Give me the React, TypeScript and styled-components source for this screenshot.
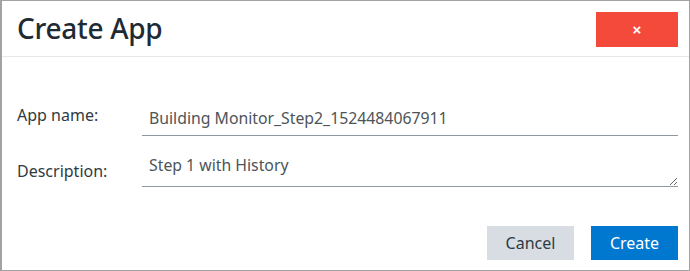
import React from 'react';
import styled, { createGlobalStyle } from 'styled-components';

const GlobalStyle = createGlobalStyle`
  body {
    margin: 0;
    background: #ffffff;
    font-family: 'Noto Sans', 'Liberation Sans', sans-serif;
  }
`;

const Dialog = styled.div`
  box-sizing: border-box;
  width: 690px;
  height: 271px;
  border: 1px solid #a2a2a2;
  border-left-width: 2px;
  background: #ffffff;
  display: flex;
  flex-direction: column;
`;

const Header = styled.div`
  box-sizing: border-box;
  height: 56px;
  padding: 0 11px 0 15px;
  display: flex;
  align-items: center;
  justify-content: space-between;
  border-bottom: 1px solid #e6e8e9;
`;

const Title = styled.h1`
  margin: 0;
  font-size: 28px;
  font-weight: 500;
  color: #1f2b34;
  letter-spacing: -0.3px;
  line-height: 1;
  margin-top: -2px;
`;

const CloseButton = styled.button`
  width: 82px;
  height: 35px;
  margin-top: 2px;
  border: none;
  background: #f44a3b;
  color: #ffffff;
  font-size: 15px;
  font-weight: 700;
  display: flex;
  align-items: center;
  justify-content: center;
  padding: 0;
  cursor: pointer;
`;

const Form = styled.div`
  padding: 43px 11px 0 15px;
  display: grid;
  grid-template-columns: 125px 1fr;
  row-gap: 15px;
  align-items: center;
`;

const Label = styled.label<{ $offset?: number }>`
  font-size: 16px;
  color: #2f3a42;
  position: relative;
  top: ${(p) => p.$offset ?? 0}px;
`;

const TextInput = styled.input`
  box-sizing: border-box;
  width: 100%;
  height: 36px;
  border: none;
  border-bottom: 1px solid #8d9aa3;
  padding: 0 7px;
  font-family: inherit;
  font-size: 15.8px;
  color: #4d5459;
  outline: none;
  background: transparent;
`;

const TextArea = styled.textarea`
  box-sizing: border-box;
  width: 100%;
  height: 36px;
  border: none;
  border-bottom: 1px solid #8d9aa3;
  padding: 3px 7px 0;
  font-family: inherit;
  font-size: 15.8px;
  line-height: 22px;
  color: #4d5459;
  outline: none;
  resize: vertical;
  background: transparent;
  display: block;
`;

const Footer = styled.div`
  margin-top: auto;
  padding: 0 11px 10px 0;
  display: flex;
  justify-content: flex-end;
  gap: 17px;
`;

const ActionButton = styled.button<{ $primary?: boolean }>`
  width: 87px;
  height: 34px;
  border: none;
  padding: 0;
  font-family: inherit;
  font-size: 16px;
  background: ${(p) => (p.$primary ? '#0078d0' : '#d7dde2')};
  color: ${(p) => (p.$primary ? '#ffffff' : '#2d3a44')};
  cursor: pointer;
`;

export default function App() {
  return (
    <>
      <GlobalStyle />
      <Dialog>
        <Header>
          <Title>Create App</Title>
          <CloseButton aria-label="Close">×</CloseButton>
        </Header>
        <Form>
          <Label $offset={-3}>App name:</Label>
          <TextInput defaultValue="Building Monitor_Step2_1524484067911" />
          <Label $offset={2}>Description:</Label>
          <TextArea defaultValue="Step 1 with History" />
        </Form>
        <Footer>
          <ActionButton>Cancel</ActionButton>
          <ActionButton $primary>Create</ActionButton>
        </Footer>
      </Dialog>
    </>
  );
}
